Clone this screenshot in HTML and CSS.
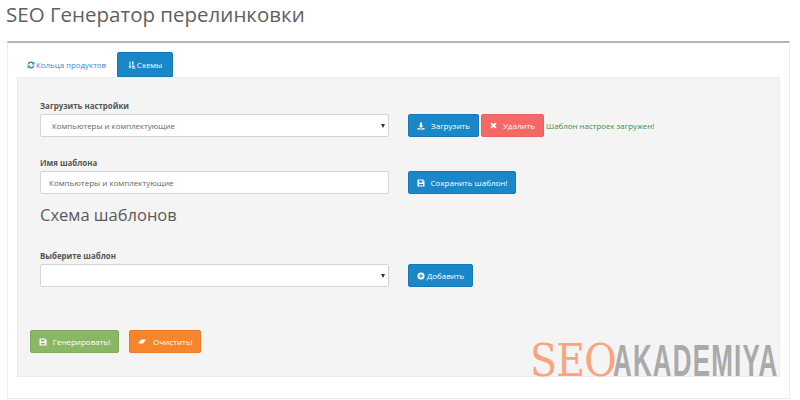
FILE: index.html
```html
<!DOCTYPE html>
<html lang="ru">
<head>
<meta charset="utf-8">
<title>SEO Генератор перелинковки</title>
<link rel="stylesheet" href="styles.css">
</head>
<body>
<h1 class="title">SEO Генератор перелинковки</h1>
<div class="box">
  <div class="tabs">
    <a class="tab">
      <svg class="ico" viewBox="0 0 16 16"><path d="M1 7a7 7 0 0 1 12-4L15 1v6H9l2-2A4.500 4.500 0 0 0 4 7zM15 9a7 7 0 0 1-12 4L1 15V9h6l-2 2A4.500 4.500 0 0 0 12 9z"/></svg>Кольца продуктов
    </a>
    <a class="tab active">
      <svg class="ico" viewBox="0 0 16 16"><path d="M3 1h2v10h2l-3 4-3-4h2zM8 1h3v5H8zM8 7h4v2H8zM8 10h5v2H8zM8 13h7v2H8z"/></svg>Схемы
    </a>
  </div>
  <div class="panel">
    <div class="row row-first">
      <div class="field">
        <label class="label">Загрузить настройки</label>
        <div class="control select">Компьютеры и комплектующие<span class="caret"></span></div>
      </div>
      <div class="actions">
        <button class="btn blue wide-a"><svg class="ico" viewBox="0 0 16 16"><path d="M6 1h4v6h3l-5 5-5-5h3zM1 12h4l3 2 3-2h4v3H1z"/></svg>Загрузить</button>
        <button class="btn red wide-b"><svg class="ico small" viewBox="0 0 16 16"><path d="M4 1l4 4 4-4 3 3-4 4 4 4-3 3-4-4-4 4-3-3 4-4-4-4z"/></svg>Удалить</button>
        <span class="notice">Шаблон настроек загружен!</span>
      </div>
    </div>
    <div class="row row-second">
      <div class="field">
        <label class="label">Имя шаблона</label>
        <div class="control input">Компьютеры и комплектующие</div>
      </div>
      <div class="actions">
        <button class="btn blue wide-c"><svg class="ico" viewBox="0 0 16 16"><path fill-rule="evenodd" d="M2 1h10l3 3v11H1V2zM4 3v4h7V3zM4 10v3h8v-3z"/></svg>Сохранить шаблон!</button>
      </div>
    </div>
    <h2 class="subtitle">Схема шаблонов</h2>
    <div class="row row-third">
      <div class="field">
        <label class="label">Выберите шаблон</label>
        <div class="control select"><span class="caret"></span></div>
      </div>
      <div class="actions">
        <button class="btn blue wide-d tight"><svg class="ico" viewBox="0 0 16 16"><path fill-rule="evenodd" d="M8 1a7 7 0 1 1 0 14A7 7 0 0 1 8 1zM7 4v3H4v2h3v3h2V9h3V7H9V4z"/></svg>Добавить</button>
      </div>
    </div>
    <div class="footer-actions">
      <button class="btn green wide-e"><svg class="ico" viewBox="0 0 16 16"><path fill-rule="evenodd" d="M2 1h10l3 3v11H1V2zM4 3v4h7V3zM4 10v3h8v-3z"/></svg>Генерировать!</button>
      <button class="btn orange wide-f"><svg class="ico wide" viewBox="0 0 16 16"><path d="M6 3h10L10 11H0z"/></svg>Очистить!</button>
    </div>
  </div>
  <div class="logo"><span class="logo-seo">SEO</span><span class="logo-ak">AKADEMIYA</span></div>
</div>
</body>
</html>
```
FILE: styles.css
```css
* { box-sizing: border-box; }
html, body { margin: 0; padding: 0; }
body {
  width: 800px;
  height: 400px;
  overflow: hidden;
  background: #fff;
  font-family: "Open Sans", "Liberation Sans", sans-serif;
  color: #555;
  padding: 0 10px 0 7px;
}
.title {
  margin: 0 0 0 -1px;
  height: 41px;
  font-size: 20.5px;
  line-height: 28px;
  font-weight: 400;
  color: #5f5f5f;
}
.box {
  position: relative;
  height: 358px;
  border: 1px solid #ececec;
  border-top: 2px solid #b4b4b4;
  padding: 9px 9px 0 9px;
}
.tabs { display: flex; height: 25px; }
.tab {
  display: flex;
  align-items: center;
  height: 25px;
  font-size: 7.9px;
  color: #3a8cc4;
  border-radius: 2px 2px 0 0;
}
.tab:first-child { width: 100px; padding-left: 10px; }
.tab.active {
  width: 56px;
  justify-content: center;
  background: #1a87c9;
  color: #fff;
  border: 1px solid #1679b5;
}
.ico { width: 8px; height: 8px; fill: currentColor; margin-right: 1px; flex: none; }
.ico.small { width: 7px; height: 7px; }
.ico.wide { width: 10px; }
.panel {
  height: 300px;
  background: #f4f4f4;
  border: 1px solid #ececec;
  padding: 0 0 0 22px;
}
.row { display: flex; align-items: flex-end; }
.row-first { padding-top: 23px; }
.row-second { padding-top: 21px; }
.row-third { padding-top: 28px; }
.field { width: 349px; flex: none; }
.label {
  display: block;
  height: 10px;
  font-size: 7.9px;
  line-height: 10px;
  font-weight: 700;
  color: #555;
  margin-bottom: 3px;
}
.control {
  position: relative;
  height: 23px;
  background: #fff;
  border: 1px solid #d5d5d5;
  border-radius: 2px;
  font-size: 7.9px;
  line-height: 22px;
  color: #666;
}
.select { padding-left: 11px; }
.input { padding-left: 8px; font-size: 8px; }
.caret {
  position: absolute;
  right: 2px;
  top: 9px;
  width: 0;
  height: 0;
  border-left: 2.5px solid transparent;
  border-right: 2.5px solid transparent;
  border-top: 4px solid #333;
  margin-right: 1px;
}
.actions { display: flex; align-items: center; margin-left: 19px; height: 23px; flex: none; }
.btn {
  display: flex;
  align-items: center;
  justify-content: center;
  height: 23px;
  padding: 0;
  border: 1px solid transparent;
  border-radius: 2px;
  font-family: inherit;
  font-size: 8px;
  color: #fff;
}
.btn .ico { margin-right: 6px; }
.btn.tight .ico { margin-right: 2px; }
.blue { background: #1a87c9; border-color: #1679b5; }
.red { background: #f56868; border-color: #ee5f5f; }
.green { background: #8ab766; border-color: #7fab5c; }
.orange { background: #f6862e; border-color: #ea7b24; }
.wide-a { width: 71px; }
.wide-b { width: 63px; margin-left: 2px; }
.wide-c { width: 108px; }
.wide-d { width: 65px; }
.wide-e { width: 89px; }
.wide-f { width: 72px; margin-left: 10px; }
.notice { margin-left: 2px; font-size: 7.9px; color: #3c8b3c; white-space: nowrap; }
.subtitle {
  margin: 0 0 -5px;
  padding-top: 9px;
  height: 34px;
  font-size: 16.5px;
  line-height: 24px;
  font-weight: 400;
  color: #5a5a5a;
}
.footer-actions { display: flex; margin-top: 43px; margin-left: -10px; }
.logo {
  position: absolute;
  left: 522px;
  bottom: 21px;
  display: flex;
  align-items: flex-end;
  width: 250px;
  height: 33px;
}
.logo-seo {
  display: block;
  flex: none;
  width: 83px;
  height: 33px;
  font-family: "DejaVu Serif", "Liberation Serif", serif;
  font-size: 44px;
  line-height: 33px;
  color: #f8a57f;
  transform: scaleX(.9);
  transform-origin: left center;
  letter-spacing: -1px;
}
.logo-ak {
  display: block;
  flex: none;
  height: 33px;
  font-family: "Liberation Sans", sans-serif;
  font-weight: 700;
  font-size: 44px;
  line-height: 33px;
  letter-spacing: 2px;
  color: #aaaaaa;
  transform: scaleX(.59);
  transform-origin: left center;
  white-space: nowrap;
}
```
